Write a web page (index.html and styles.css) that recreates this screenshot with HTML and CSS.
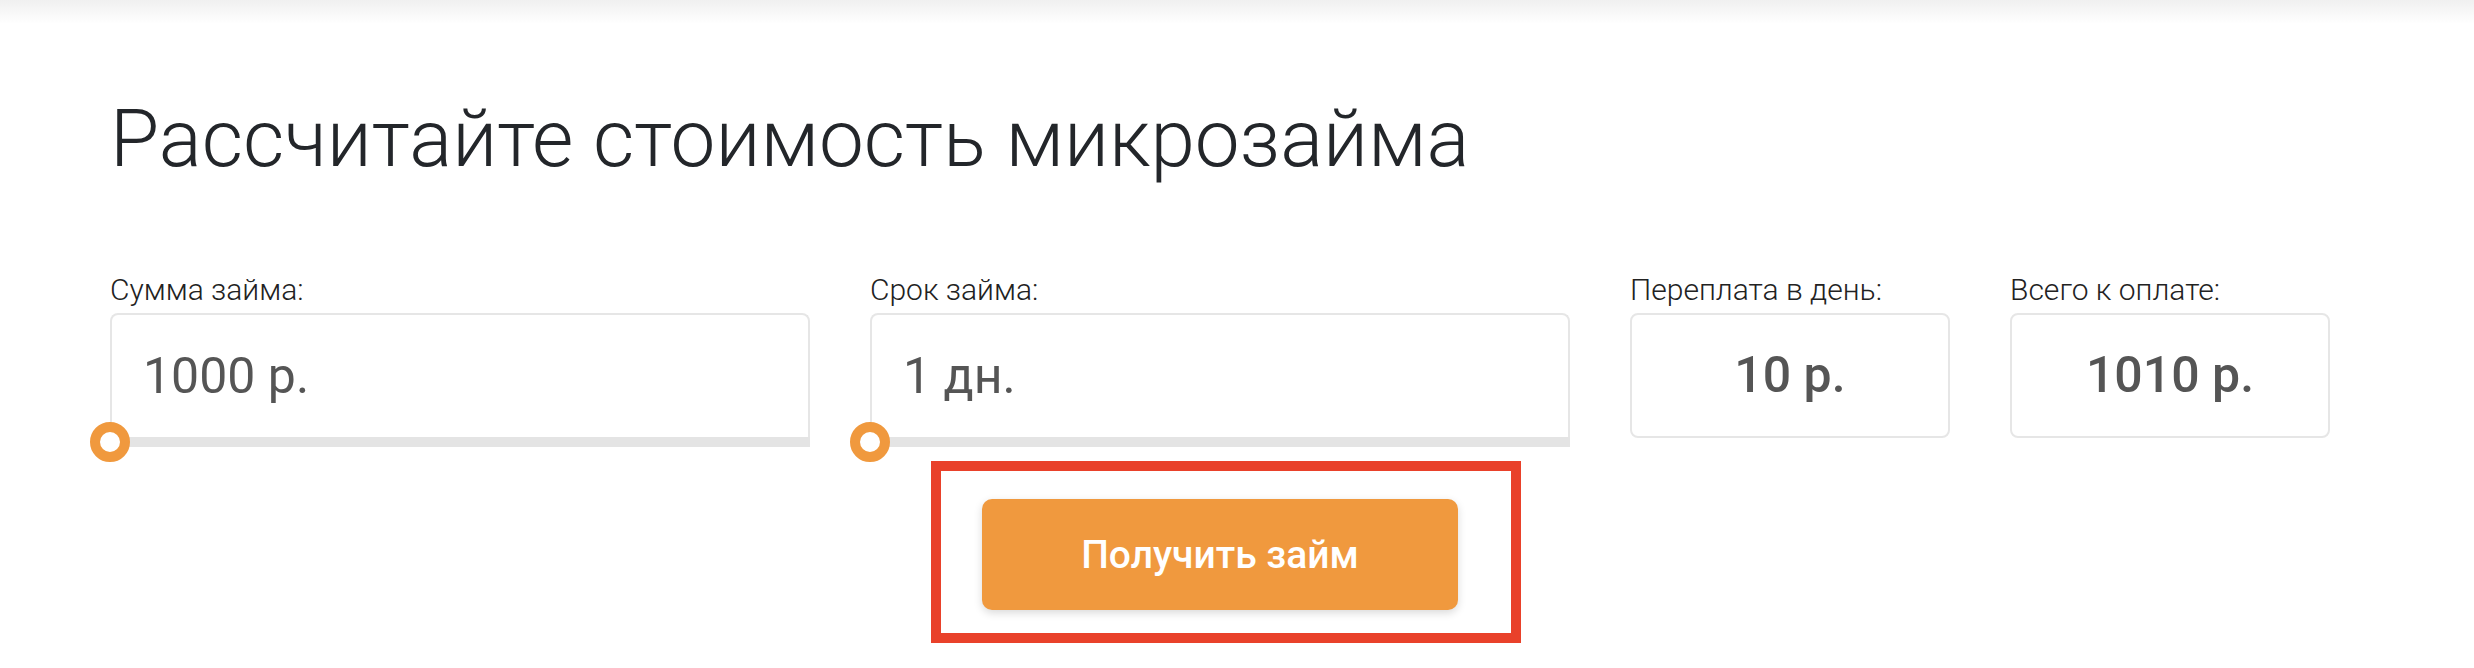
FILE: index.html
```html
<!doctype html>
<html lang="ru">

<head>
  <meta charset="utf-8" />
  <meta name="viewport" content="width=device-width,initial-scale=1" />
  <title>Калькулятор микрозайма</title>

  <link rel="stylesheet" href="styles.css">
</head>

<body>
  <div class="top-shade"></div>
  <div id="root">
    <h1 class="title">Рассчитайте стоимость микрозайма</h1>

    <div class="fields">
      <div class="field field-wide">
        <div class="label">Сумма займа:</div>
        <div class="input-box">1000 р.</div>
        <div class="track">
          <div class="thumb"></div>
        </div>
      </div>
      <div class="field field-wide">
        <div class="label">Срок займа:</div>
        <div class="input-box">1 дн.</div>
        <div class="track">
          <div class="thumb"></div>
        </div>
      </div>
      <div class="field field-narrow">
        <div class="label">Переплата в день:</div>
        <div class="result-box">10 р.</div>
      </div>
      <div class="field field-narrow">
        <div class="label">Всего к оплате:</div>
        <div class="result-box">1010 р.</div>
      </div>
    </div>

    <div class="highlight">
      <button type="button" class="get-loan">Получить займ</button>
    </div>
  </div>
</body>

</html>
```

FILE: styles.css
```css
html,
body {
  margin: 0;
  padding: 0;
  background: #fff;
}

* {
  font-family: Roboto, "Liberation Sans", sans-serif;
}

.top-shade {
  height: 24px;
  background: linear-gradient(to bottom, #f0f0f0, #fff);
}

#root {
  width: 2220px;
  padding-left: 110px;
}

.title {
  margin: 67px 0 0 0;
  font-size: 80px;
  line-height: 1.2;
  font-weight: 300;
  color: #23262a;
}

.fields {
  display: flex;
  gap: 60px;
  margin-top: 88px;
}

.field-wide {
  flex: 0 0 700px;
}

.field-narrow {
  flex: 0 0 320px;
}

.label {
  font-size: 30px;
  line-height: 30px;
  font-weight: 300;
  color: #222;
  margin-bottom: 8px;
}

.input-box {
  box-sizing: border-box;
  height: 124px;
  line-height: 122px;
  padding-left: 31px;
  border: 2px solid #e6e6e6;
  border-bottom: none;
  border-radius: 8px 8px 0 0;
  font-size: 50px;
  color: #555;
}

.track {
  position: relative;
  height: 10px;
  background: #e4e4e4;
}

.thumb {
  position: absolute;
  left: -20px;
  top: -15px;
  box-sizing: border-box;
  width: 40px;
  height: 40px;
  border: 10px solid #f0993e;
  border-radius: 50%;
  background: #fff;
}

.result-box {
  box-sizing: border-box;
  height: 125px;
  line-height: 121px;
  border: 2px solid #e6e6e6;
  border-radius: 8px;
  text-align: center;
  font-size: 50px;
  font-weight: 500;
  color: #555;
}

.highlight {
  display: inline-block;
  margin: 14px 0 0 821px;
  padding: 28px 53px 23px 41px;
  border: 10px solid #e9412a;
}

.get-loan {
  display: block;
  width: 476px;
  height: 111px;
  border: none;
  border-radius: 10px;
  background: #f0993e;
  color: #fff;
  font-size: 39px;
  font-weight: 500;
  box-shadow: 0 3px 8px rgba(0, 0, 0, 0.15);
  cursor: pointer;
}
```
